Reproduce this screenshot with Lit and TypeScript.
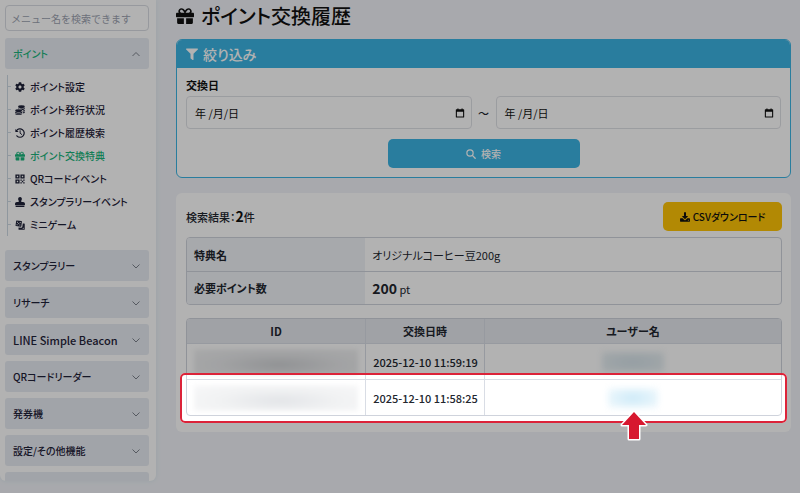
import { LitElement, html, css, svg } from "lit";
import { customElement, state } from "lit/decorators.js";
import { classMap } from "lit/directives/class-map.js";

const GIFT = svg`<path d="M32 448c0 17.700 14.300 32 32 32h160V320H32v128zm256 32h160c17.700 0 32-14.300 32-32V320H288v160zm192-320h-42.100c6.200-12.100 10.100-25.500 10.100-40 0-48.500-39.500-88-88-88-41.600 0-68.500 21.300-103 68.300-34.500-47-61.400-68.300-103-68.300-48.500 0-88 39.500-88 88 0 14.500 3.800 27.900 10.100 40H32c-17.700 0-32 14.300-32 32v80c0 8.800 7.200 16 16 16h480c8.800 0 16-7.200 16-16v-80c0-17.700-14.300-32-32-32zm-326.100 0c-22.100 0-40-17.900-40-40s17.900-40 40-40c19.900 0 34.600 3.300 86.100 80h-86.100zm206.100 0h-86.100c51.400-76.500 65.700-80 86.100-80 22.100 0 40 17.900 40 40s-17.900 40-40 40z"/>`;
const GEAR = svg`<path d="M487.400 315.700l-42.600-24.600c4.300-23.200 4.300-47 0-70.200l42.600-24.600c4.900-2.800 7.100-8.600 5.500-14-11.100-35.600-30-67.800-54.700-94.600-3.800-4.100-10-5.100-14.800-2.300L380.800 110c-17.900-15.400-38.500-27.300-60.800-35.100V25.800c0-5.600-3.900-10.500-9.400-11.700-36.700-8.200-74.300-7.800-109.200 0-5.500 1.200-9.400 6.100-9.400 11.700V75c-22.200 7.900-42.800 19.800-60.800 35.100L88.700 85.500c-4.900-2.800-11-1.900-14.800 2.300-24.700 26.700-43.600 58.900-54.700 94.600-1.700 5.400.6 11.200 5.500 14L67.300 221c-4.300 23.200-4.300 47 0 70.200l-42.600 24.600c-4.900 2.800-7.100 8.600-5.500 14 11.100 35.600 30 67.800 54.700 94.600 3.800 4.100 10 5.100 14.800 2.300l42.600-24.600c17.900 15.400 38.500 27.300 60.800 35.100v49.200c0 5.600 3.900 10.500 9.400 11.700 36.700 8.200 74.300 7.800 109.200 0 5.500-1.200 9.400-6.100 9.400-11.700v-49.200c22.200-7.900 42.800-19.800 60.800-35.100l42.600 24.600c4.900 2.800 11 1.900 14.800-2.300 24.700-26.700 43.600-58.900 54.700-94.600 1.500-5.500-.7-11.300-5.600-14.100zM256 336c-44.100 0-80-35.900-80-80s35.900-80 80-80 80 35.900 80 80-35.900 80-80 80z"/>`;
const COINS = svg`<ellipse cx="330" cy="90" rx="170" ry="75"/><path d="M165 150c40 40 290 50 335-10v50c-10 50-100 65-140 62-30-42-110-62-195-55zM390 290c50-5 90-20 110-45v50c-15 30-60 42-110 45zM390 378c50-5 90-20 110-45v50c-15 30-60 42-110 45z"/><ellipse cx="185" cy="290" rx="175" ry="68"/><path d="M10 350c50 50 300 50 350 0v45c-30 75-320 75-350 0zM10 440c50 50 300 50 350 0v15c-30 70-320 70-350 0z"/>`;
const HISTORY = svg`<path d="M70 150A215 215 0 1 1 95 400" fill="none" stroke="currentColor" stroke-width="62" stroke-linecap="round"/><path d="M20 50v160h165z"/><path d="M262 140v125l80 65" fill="none" stroke="currentColor" stroke-width="50" stroke-linecap="round"/>`;
const QR = svg`<path fill-rule="evenodd" d="M20 20h215v215H20zM92 92v71h71V92zM277 20h215v215H277zM349 92v71h71V92zM20 277h215v215H20zM92 349v71h71v-71z"/><path d="M277 277h70v70h-70zM350 350h70v70h-70zM422 277h70v70h-70zM277 422h70v70h-70zM422 422h70v70h-70z"/>`;
const STAMP = svg`<path d="M32 512h448v-64H32v64zm384-256h-66.560c-16.260 0-29.440-13.180-29.440-29.440v-9.460c0-27.370 8.880-53.410 21.460-77.720 9.110-17.610 12.900-38.390 9.050-60.420-6.770-38.780-38.470-70.700-77.260-77.450C212.620-9.040 160 37.330 160 96c0 14.160 3.120 27.540 8.690 39.580C182.020 164.430 192 194.700 192 226.490v.07c0 16.260-13.180 29.440-29.440 29.440H96c-53.020 0-96 42.980-96 96v32c0 17.670 14.330 32 32 32h448c17.670 0 32-14.330 32-32v-32c0-53.020-42.980-96-96-96z"/>`;
const DICE = svg`<path fill-rule="evenodd" d="M90 20l240 30q25 5 25 30l-30 240q-5 25-30 22L50 310q-25-5-22-30L60 42q5-24 30-22zM125 85a28 28 0 1 0 1 0zM265 105a28 28 0 1 0 1 0zM190 155a28 28 0 1 0 1 0zM105 215a28 28 0 1 0 1 0zM250 230a28 28 0 1 0 1 0z"/><path fill-rule="evenodd" d="M400 180h70q28 0 28 28v262q0 28-28 28H208q-28 0-28-28v-85l130 15q55 0 65-50zM420 395a30 30 0 1 0 1 0z"/>`;
const FILTER = svg`<path d="M488 20H24C3 20-8 46 7 61l185 185v186c0 8 4 15 10 20l80 56c16 11 38 0 38-20V246L505 61c15-15 4-41-17-41z"/>`;
const SEARCH = svg`<circle cx="205" cy="205" r="160" fill="none" stroke="currentColor" stroke-width="62"/><path d="M325 325l145 145" stroke="currentColor" stroke-width="68" stroke-linecap="round"/>`;
const DOWNLOAD = svg`<path d="M220 10h72q16 0 16 16v184h86q22 2 8 20L268 364q-12 10-24 0L110 230q-14-18 8-20h86V26q0-16 16-16z"/><path fill-rule="evenodd" d="M26 325h110l90 82q30 20 60 0l90-82h110q24 0 24 24v128q0 24-24 24H26q-24 0-24-24V349q0-24 24-24zM425 395a24 24 0 1 0 1 0z"/>`;
const CALENDAR = svg`<path fill-rule="evenodd" d="M120 20h60v40h152V20h60v40h48q30 0 30 30v370q0 30-30 30H72q-30 0-30-30V90q0-30 30-30h48zM98 190v244h316V190z"/>`;

const icon = (shape: unknown, cls: string) =>
  html`<svg class="icon ${cls}" viewBox="0 0 512 512" fill="currentColor" aria-hidden="true">${shape}</svg>`;

const chevron = (up: boolean) =>
  html`<svg class="chevron" viewBox="0 0 10 10" fill="none" stroke="currentColor" aria-hidden="true">
    <path d=${up ? "M1.500 7L5 3.500L8.500 7" : "M1.500 3.500L5 7L8.500 3.500"} />
  </svg>`;

const sharedIcon = css`
  * { box-sizing: border-box; }
  .icon { display: block; flex: none; }
`;

@customElement("side-menu")
class SideMenu extends LitElement {
  static styles = [
    sharedIcon,
    css`
      :host { display: block; font-size: 10px; }
      .panel {
        max-height: calc(100vh - 12px);
        overflow: hidden;
        padding: 5px 7px 0 5px;
        background: #fff;
        border-radius: 0 0 6px 6px;
        box-shadow: 0 0 5px #dbe8ee;
      }
      .find {
        display: block;
        width: 100%;
        height: 26px;
        padding: 0 5px;
        border: 1px solid #d8dce2;
        border-radius: 4px;
        background: #fff;
        color: #1f2238;
        font: inherit;
        font-feature-settings: normal;
        outline: none;
      }
      .find::placeholder { color: #9ca2b0; opacity: 1; }
      .group {
        display: flex;
        align-items: center;
        justify-content: space-between;
        width: 100%;
        height: 31px;
        margin-top: 6px;
        padding: 0 8px;
        border: 0;
        border-radius: 3px;
        background: #e7ebf2;
        color: #1f2238;
        font: inherit;
        font-feature-settings: inherit;
        font-weight: 500;
      }
      .group.open { margin-top: 7px; color: #1bb57c; }
      .latin { font-size: 11px; }
      .chevron { width: 10px; height: 10px; color: #7c818c; }
      .tree {
        margin: 6px 0 14px 2px;
        padding: 0;
        list-style: none;
        border-left: 1px solid #cdd9e3;
      }
      .tree li { display: flex; align-items: center; height: 23px; }
      .tree li::before { content: ""; width: 3px; height: 1px; margin-right: 4px; background: #cdd9e3; }
      .tree a {
        display: flex;
        align-items: center;
        gap: 5px;
        color: #1f2238;
        font-weight: 500;
        text-decoration: none;
        white-space: nowrap;
      }
      .tree a.current { color: #1bb57c; }
      .menu { width: 10px; height: 10px; }
    `,
  ];

  private items = [
    { label: "ポイント設定", shape: GEAR },
    { label: "ポイント発行状況", shape: COINS },
    { label: "ポイント履歴検索", shape: HISTORY },
    { label: "ポイント交換特典", shape: GIFT, current: true },
    { label: "QRコードイベント", shape: QR },
    { label: "スタンプラリーイベント", shape: STAMP },
    { label: "ミニゲーム", shape: DICE },
  ];

  private groups = ["スタンプラリー", "リサーチ", "LINE Simple Beacon", "QRコードリーダー", "発券機", "設定/その他機能"];

  render() {
    return html`<nav class="panel">
      <input class="find" type="search" placeholder="メニュー名を検索できます" aria-label="メニュー名を検索" />
      <button class="group open" aria-expanded="true"><span>ポイント</span>${chevron(true)}</button>
      <ul class="tree">
        ${this.items.map(
          (i) => html`<li>
            <a href="#" class=${classMap({ current: !!i.current })}>${icon(i.shape, "menu")}<span>${i.label}</span></a>
          </li>`
        )}
      </ul>
      ${this.groups.map(
        (g) => html`<button class="group" aria-expanded="false">
          <span class=${classMap({ latin: g.startsWith("LINE") })}>${g}</span>${chevron(false)}
        </button>`
      )}
      <button class="group" aria-label="その他"></button>
    </nav>`;
  }
}

@customElement("date-field")
class DateField extends LitElement {
  static properties = { label: {} };
  declare label: string;

  @state() private filled = false;

  static styles = [
    sharedIcon,
    css`
      :host { display: block; flex: 1; min-width: 0; }
      .box { position: relative; display: block; }
      input {
        display: block;
        width: 100%;
        height: 33px;
        padding: 0 6px 0 8px;
        border: 1px solid #dfe1e6;
        border-radius: 4px;
        background: #fff;
        font: inherit;
      }
      .empty::-webkit-datetime-edit { visibility: hidden; }
      input::-webkit-calendar-picker-indicator { opacity: 0; }
      .hint {
        position: absolute;
        inset: 0;
        display: flex;
        align-items: center;
        justify-content: space-between;
        padding: 0 7px 0 9px;
        pointer-events: none;
        color: #111;
      }
      .calendar { width: 10px; height: 10px; margin-left: auto; }
    `,
  ];

  render() {
    return html`<label class="box">
      <input
        type="date"
        aria-label=${this.label}
        class=${classMap({ empty: !this.filled })}
        @change=${(e: Event) => (this.filled = !!(e.target as HTMLInputElement).value)}
      />
      <span class="hint">${this.filled ? "" : html`<span>年 /月/日</span>`}${icon(CALENDAR, "calendar")}</span>
    </label>`;
  }
}

@customElement("app-root")
class AppRoot extends LitElement {
  static styles = [
    sharedIcon,
    css`
      :host {
        display: grid;
        grid-template-columns: 156px minmax(0, 1fr);
        gap: 20px;
        min-height: 100vh;
        padding-right: 9px;
        overflow: hidden;
        background: #f1f3f8;
        color: #22262e;
        font: 11px/16px "Noto Sans CJK JP", "Noto Sans", sans-serif;
        font-feature-settings: "palt";
      }
      main { display: flex; flex-direction: column; min-width: 0; }
      h1 {
        display: flex;
        align-items: center;
        gap: 7px;
        height: 32px;
        margin: 0 0 7px;
        font-size: 20px;
        font-weight: 500;
        color: #111;
      }
      .title { width: 18px; height: 18px; }
      .filter { border: 1px solid #3cb4e3; border-radius: 6px; background: #fff; overflow: hidden; }
      h2 {
        display: flex;
        align-items: center;
        gap: 5px;
        height: 28px;
        margin: 0;
        padding: 0 9px;
        background: #3cb4e3;
        color: #fff;
        font-size: 14px;
        font-weight: 500;
      }
      .funnel { width: 12px; height: 12px; }
      .fields { padding: 9px; }
      .name { display: block; height: 19px; font-weight: 700; color: #111; }
      .range { display: flex; align-items: center; }
      .tilde { width: 24px; text-align: center; font-weight: 500; }
      .search {
        display: flex;
        align-items: center;
        justify-content: center;
        gap: 5px;
        width: 192px;
        height: 29px;
        margin: 10px auto 0;
        border: 0;
        border-radius: 5px;
        background: #3cb4e3;
        color: #fff;
        font: inherit;
        font-size: 10px;
        font-weight: 500;
      }
      .small { width: 10px; height: 10px; }
      .results { margin-top: 15px; padding: 9px 9px 16px 10px; border-radius: 6px; background: #fff; }
      .bar { display: flex; align-items: center; justify-content: space-between; margin-bottom: 6px; }
      .count { margin: 0; font-weight: 500; }
      .count strong { font-size: 14px; color: #111; }
      .csv {
        display: flex;
        align-items: center;
        justify-content: center;
        gap: 3px;
        width: 119px;
        height: 29px;
        border: 0;
        border-radius: 5px;
        background: #ffc507;
        color: #111;
        font: inherit;
        font-size: 10px;
        font-weight: 500;
      }
      table {
        width: 100%;
        table-layout: fixed;
        border-collapse: separate;
        border-spacing: 0;
        border: 1px solid #cfd3dc;
        border-radius: 4px;
        overflow: hidden;
      }
      th, td { padding: 0 7px; }
      .info th { width: 30%; background: #f0f2f7; text-align: left; font-weight: 700; }
      .info td, .info th { height: 33px; }
      .info tr + tr > * { border-top: 1px solid #cfd3dc; }
      .points { font-size: 14px; }
      .log { position: relative; margin-top: 13px; }
      .list th { height: 24px; background: #e6e8ee; font-weight: 700; }
      .list td { height: 36px; border-top: 1px solid #d9dde5; }
      .list tr > * + * { border-left: 1px solid #d9dde5; }
      .id { width: 30%; }
      .when { width: 20%; }
      .list .stamp { font-weight: 500; white-space: nowrap; }
      .masked {
        height: 26px;
        background: radial-gradient(ellipse at 52% 60%, #d0d2d5, #e8e9eb 50%, #f2f3f4);
        filter: blur(2px);
      }
      .masked.pale { background: radial-gradient(ellipse at 52% 60%, #e3e5e8, #f1f2f3 50%, #f8f8f9); }
      .user {
        width: 62px;
        height: 20px;
        margin: 0 auto;
        background: radial-gradient(ellipse, #d6e3ea, #eaf1f4);
        filter: blur(3px);
      }
      .user.pale { width: 50px; background: radial-gradient(ellipse, #cdeaf8, #f4fafd); }
      .spotlight {
        position: absolute;
        left: -6px;
        right: -5px;
        bottom: -7px;
        height: 50px;
        border: 2px solid #dc2339;
        border-radius: 5px;
        box-shadow: 0 0 0 200vmax rgba(0, 0, 0, 0.3);
        pointer-events: none;
      }
      .arrow {
        position: absolute;
        left: 75%;
        bottom: -21px;
        width: 28px;
        height: 32px;
        transform: translateX(-50%);
      }
    `,
  ];

  private rows = ["2025-12-10 11:59:19", "2025-12-10 11:58:25"];

  render() {
    return html`
      <side-menu></side-menu>
      <main>
        <h1>${icon(GIFT, "title")}<span>ポイント交換履歴</span></h1>
        <section class="filter">
          <h2>${icon(FILTER, "funnel")}<span>絞り込み</span></h2>
          <div class="fields" role="group" aria-labelledby="range-name">
            <span class="name" id="range-name">交換日</span>
            <div class="range">
              <date-field label="交換日(開始)"></date-field>
              <span class="tilde">～</span>
              <date-field label="交換日(終了)"></date-field>
            </div>
            <button class="search">${icon(SEARCH, "small")}<span>検索</span></button>
          </div>
        </section>
        <section class="results">
          <div class="bar">
            <p class="count">検索結果：<strong>2</strong>件</p>
            <button class="csv">${icon(DOWNLOAD, "small")}<span>CSVダウンロード</span></button>
          </div>
          <table class="info">
            <tr><th scope="row">特典名</th><td>オリジナルコーヒー豆200g</td></tr>
            <tr><th scope="row">必要ポイント数</th><td><strong class="points">200</strong> pt</td></tr>
          </table>
          <div class="log">
            <table class="list">
              <thead>
                <tr><th class="id" scope="col">ID</th><th class="when" scope="col">交換日時</th><th scope="col">ユーザー名</th></tr>
              </thead>
              <tbody>
                ${this.rows.map(
                  (when, n) => html`<tr>
                    <td><div class=${classMap({ masked: true, pale: n === 1 })}></div></td>
                    <td class="stamp">${when}</td>
                    <td><div class=${classMap({ user: true, pale: n === 1 })}></div></td>
                  </tr>`
                )}
              </tbody>
            </table>
            <div class="spotlight">
              <svg class="arrow" viewBox="0 0 28 32" aria-hidden="true">
                <path d="M14 2L26 15H19V29H9V15H2Z" fill="#d7182f" stroke="#fff" stroke-width="3" stroke-linejoin="round" paint-order="stroke" />
              </svg>
            </div>
          </div>
        </section>
      </main>
    `;
  }
}
